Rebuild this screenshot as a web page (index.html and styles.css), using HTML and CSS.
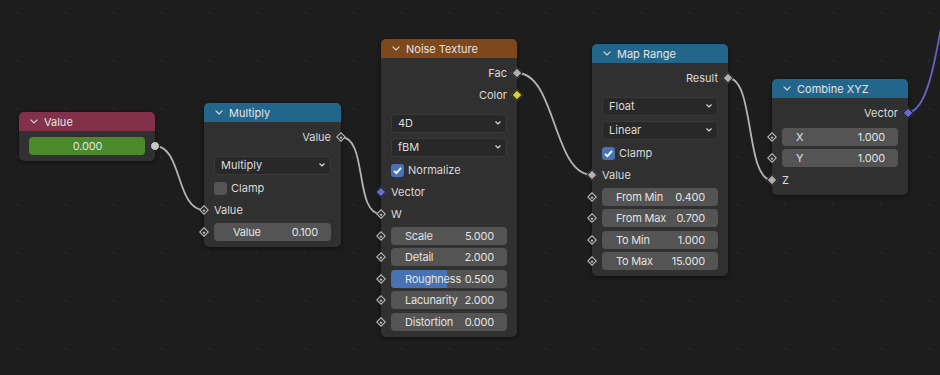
FILE: index.html
```html
<!DOCTYPE html>
<html lang="en">
<head>
    <meta charset="UTF-8">
    <title>Node Editor</title>
    <link rel="stylesheet" href="styles.css">
</head>
<body>

<div class="canvas">

    <!-- Связи между нодами -->
    <svg class="wires" width="940" height="375" viewBox="0 0 940 375">
        <path class="wire" d="M155,146 C182,146 176,210 204,210"/>
        <path class="wire" d="M341,137 C368,137 354,214 381,214"/>
        <path class="wire" d="M517,73 C556,73 553,175 592,175"/>
        <path class="wire" d="M728,78 C755,78 745,180 772,180"/>
        <path class="wire wire-vector" d="M908,113 C926,110 934,70 944,10"/>
    </svg>

    <!-- Value -->
    <div class="node node-value">
        <div class="node-header header-input">
            <svg class="chevron" width="8" height="5" viewBox="0 0 8 5"><polyline points="0.6,0.6 4,4 7.4,0.6"/></svg>
            <span>Value</span>
        </div>
        <div class="node-body">
            <div class="row row-field">
                <div class="field field-green">0.000</div>
                <span class="socket socket-out sock-circle"></span>
            </div>
        </div>
    </div>

    <!-- Multiply -->
    <div class="node node-multiply">
        <div class="node-header header-converter">
            <svg class="chevron" width="8" height="5" viewBox="0 0 8 5"><polyline points="0.6,0.6 4,4 7.4,0.6"/></svg>
            <span>Multiply</span>
        </div>
        <div class="node-body">
            <div class="row row-out">Value<span class="socket socket-out sock-dot"></span></div>
            <div class="selects">
                <div class="row row-select">
                    <div class="select"><span>Multiply</span><svg class="drop" width="6" height="4" viewBox="0 0 6 4"><polyline points="0.5,0.5 3,3 5.5,0.5"/></svg></div>
                </div>
            </div>
            <div class="row"><span class="checkbox"></span>Clamp</div>
            <div class="row">Value<span class="socket socket-in sock-dot"></span></div>
            <div class="row row-field">
                <div class="field field-wide"><span>Value</span><span>0.100</span></div>
                <span class="socket socket-in sock-dot"></span>
            </div>
        </div>
    </div>

    <!-- Noise Texture -->
    <div class="node node-noise">
        <div class="node-header header-texture">
            <svg class="chevron" width="8" height="5" viewBox="0 0 8 5"><polyline points="0.6,0.6 4,4 7.4,0.6"/></svg>
            <span>Noise Texture</span>
        </div>
        <div class="node-body">
            <div class="row row-out">Fac<span class="socket socket-out sock-solid"></span></div>
            <div class="row row-out">Color<span class="socket socket-out sock-solid sock-yellow"></span></div>
            <div class="selects">
                <div class="row row-select">
                    <div class="select"><span>4D</span><svg class="drop" width="6" height="4" viewBox="0 0 6 4"><polyline points="0.5,0.5 3,3 5.5,0.5"/></svg></div>
                </div>
                <div class="row row-select">
                    <div class="select"><span>fBM</span><svg class="drop" width="6" height="4" viewBox="0 0 6 4"><polyline points="0.5,0.5 3,3 5.5,0.5"/></svg></div>
                </div>
            </div>
            <div class="row">
                <span class="checkbox checkbox-on"><svg width="13" height="13" viewBox="0 0 13 13"><polyline points="3,6.8 5.4,9.2 10,3.8"/></svg></span>Normalize
            </div>
            <div class="row">Vector<span class="socket socket-in sock-solid sock-purple"></span></div>
            <div class="row">W<span class="socket socket-in sock-dot"></span></div>
            <div class="row row-field">
                <div class="field"><span>Scale</span><span>5.000</span></div>
                <span class="socket socket-in sock-dot"></span>
            </div>
            <div class="row row-field">
                <div class="field"><span>Detail</span><span>2.000</span></div>
                <span class="socket socket-in sock-dot"></span>
            </div>
            <div class="row row-field">
                <div class="field"><span class="slider-fill" style="width: 48%"></span><span>Roughness</span><span>0.500</span></div>
                <span class="socket socket-in sock-dot"></span>
            </div>
            <div class="row row-field">
                <div class="field"><span>Lacunarity</span><span>2.000</span></div>
                <span class="socket socket-in sock-dot"></span>
            </div>
            <div class="row row-field">
                <div class="field"><span>Distortion</span><span>0.000</span></div>
                <span class="socket socket-in sock-dot"></span>
            </div>
        </div>
    </div>

    <!-- Map Range -->
    <div class="node node-map">
        <div class="node-header header-converter">
            <svg class="chevron" width="8" height="5" viewBox="0 0 8 5"><polyline points="0.6,0.6 4,4 7.4,0.6"/></svg>
            <span>Map Range</span>
        </div>
        <div class="node-body">
            <div class="row row-out">Result<span class="socket socket-out sock-solid"></span></div>
            <div class="selects">
                <div class="row row-select">
                    <div class="select"><span>Float</span><svg class="drop" width="6" height="4" viewBox="0 0 6 4"><polyline points="0.5,0.5 3,3 5.5,0.5"/></svg></div>
                </div>
                <div class="row row-select">
                    <div class="select"><span>Linear</span><svg class="drop" width="6" height="4" viewBox="0 0 6 4"><polyline points="0.5,0.5 3,3 5.5,0.5"/></svg></div>
                </div>
            </div>
            <div class="row">
                <span class="checkbox checkbox-on"><svg width="13" height="13" viewBox="0 0 13 13"><polyline points="3,6.8 5.4,9.2 10,3.8"/></svg></span>Clamp
            </div>
            <div class="row">Value<span class="socket socket-in sock-solid"></span></div>
            <div class="row row-field">
                <div class="field"><span>From Min</span><span>0.400</span></div>
                <span class="socket socket-in sock-dot"></span>
            </div>
            <div class="row row-field">
                <div class="field"><span>From Max</span><span>0.700</span></div>
                <span class="socket socket-in sock-dot"></span>
            </div>
            <div class="row row-field">
                <div class="field"><span>To Min</span><span>1.000</span></div>
                <span class="socket socket-in sock-dot"></span>
            </div>
            <div class="row row-field">
                <div class="field"><span>To Max</span><span>15.000</span></div>
                <span class="socket socket-in sock-dot"></span>
            </div>
        </div>
    </div>

    <!-- Combine XYZ -->
    <div class="node node-combine">
        <div class="node-header header-converter">
            <svg class="chevron" width="8" height="5" viewBox="0 0 8 5"><polyline points="0.6,0.6 4,4 7.4,0.6"/></svg>
            <span>Combine XYZ</span>
        </div>
        <div class="node-body">
            <div class="row row-out">Vector<span class="socket socket-out sock-solid sock-purple"></span></div>
            <div class="spacer"></div>
            <div class="row row-field">
                <div class="field"><span>X</span><span>1.000</span></div>
                <span class="socket socket-in sock-dot"></span>
            </div>
            <div class="row row-field">
                <div class="field"><span>Y</span><span>1.000</span></div>
                <span class="socket socket-in sock-dot"></span>
            </div>
            <div class="row">Z<span class="socket socket-in sock-solid"></span></div>
        </div>
    </div>

</div>

</body>
</html>
```

FILE: styles.css
```css
* {
    box-sizing: border-box;
}

body {
    margin: 0;
    padding: 0;
    background-color: #1d1d1d;
    font-family: Inter, "DejaVu Sans", sans-serif;
    font-size: 11px;
    color: #dadada;
}

/* Поле редактора с сеткой точек */
.canvas {
    position: relative;
    width: 940px;
    height: 375px;
    overflow: hidden;
    background-color: #1d1d1d;
    background-image: radial-gradient(circle, #272727 1px, transparent 1.3px);
    background-size: 48px 48px;
    background-position: -7px -11px;
}

.wires {
    position: absolute;
    left: 0;
    top: 0;
}

.wire {
    fill: none;
    stroke: #b2b2b2;
    stroke-width: 1.8;
}

.wire-vector {
    stroke: #6464c8;
}

/* Ноды */
.node {
    position: absolute;
    width: 136px;
    background-color: #303030;
    border-radius: 5px;
    box-shadow: 0 1px 4px rgba(0, 0, 0, 0.55);
}

.node-value   { left: 19px;  top: 112px; }
.node-multiply { left: 204px; top: 103px; width: 137px; }
.node-noise   { left: 381px; top: 39px; }
.node-map     { left: 592px; top: 44px; }
.node-combine { left: 772px; top: 79px; }

.node-header {
    height: 19px;
    display: flex;
    align-items: center;
    padding-left: 11px;
    border-radius: 5px 5px 0 0;
    color: #e4e4e4;
}

.header-input     { background-color: #83314a; }
.header-converter { background-color: #22668c; }
.header-texture   { background-color: #7e471c; }

.chevron {
    margin-right: 6px;
}

.chevron polyline,
.drop polyline {
    fill: none;
    stroke: #d8d8d8;
    stroke-width: 1.2;
}

.node-body {
    padding: 4px 0 4px;
}

/* Строки */
.row {
    position: relative;
    height: 22px;
    display: flex;
    align-items: center;
    padding: 0 10px;
}

.row-out {
    justify-content: flex-end;
}

.row-field {
    height: 21.5px;
}

.selects {
    padding-top: 5px;
}

.row-select {
    height: 24px;
}

.spacer {
    height: 2px;
}

/* Поля ввода */
.field {
    position: relative;
    flex: 1;
    height: 18px;
    display: flex;
    align-items: center;
    justify-content: space-between;
    padding: 0 13px 0 14px;
    background-color: #545454;
    border-radius: 4px;
    overflow: hidden;
    color: #e2e2e2;
    letter-spacing: -0.2px;
}

.field span {
    position: relative;
}

.field .slider-fill {
    position: absolute;
    left: 0;
    top: 0;
    bottom: 0;
    background-color: #4772b3;
}

.field-wide {
    padding-left: 19px;
}

.field-green {
    justify-content: center;
    background-color: #4b8a2b;
}

.select {
    flex: 1;
    height: 19px;
    display: flex;
    align-items: center;
    justify-content: space-between;
    padding: 0 5px 0 6px;
    background-color: #282828;
    border: 1px solid #3a3a3a;
    border-radius: 4px;
    color: #dcdcdc;
}

.checkbox {
    width: 13px;
    height: 13px;
    margin-right: 4px;
    border-radius: 3px;
    background-color: #545454;
}

.checkbox-on {
    background-color: #4772b3;
}

.checkbox svg {
    display: block;
}

.checkbox polyline {
    fill: none;
    stroke: #ffffff;
    stroke-width: 1.8;
}

/* Сокеты */
.socket {
    position: absolute;
    top: 50%;
    width: 7px;
    height: 7px;
    transform: translate(-50%, -50%) rotate(45deg);
}

.socket-in  { left: 0; }
.socket-out { left: 100%; }

.sock-dot {
    background-color: #2a2a2a;
    border: 1.5px solid #c2c2c2;
}

.sock-dot::after {
    content: "";
    position: absolute;
    left: 50%;
    top: 50%;
    width: 2px;
    height: 2px;
    margin: -1px 0 0 -1px;
    background-color: #c2c2c2;
}

.sock-solid {
    width: 8px;
    height: 8px;
    background-color: #b0b0b0;
    border: 1px solid #1c1c1c;
}

.sock-yellow { background-color: #d4d42a; }
.sock-purple { background-color: #6a6ad0; }

.sock-circle {
    width: 10px;
    height: 10px;
    border-radius: 50%;
    background-color: #c6c6c6;
    border: 1px solid #1c1c1c;
    transform: translate(-50%, -50%);
}
```
